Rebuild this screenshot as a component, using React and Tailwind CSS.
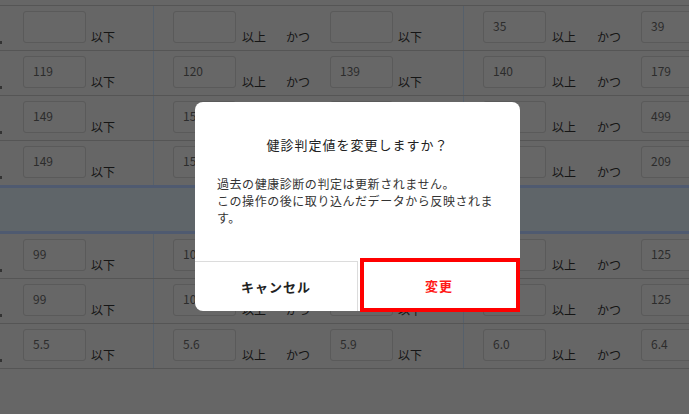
import React from "react";

const FONT = { fontFamily: '"Noto Sans CJK JP", "Noto Sans", sans-serif' };

function Box({ v }) {
  return (
    <div className="mt-[5px] h-[32px] w-[63px] shrink-0 rounded-[3px] border border-[#5a5a5a] bg-[#676767] pl-[9px] pt-[6px] text-[12px] leading-[16px] text-[#2c2c2c]">
      {v}
    </div>
  );
}

function Label({ t, ml }) {
  return (
    <span className={`mt-[23px] shrink-0 text-[12px] leading-[16px] text-[#151515] ${ml}`}>{t}</span>
  );
}

function Row({ a, b, c, d, e, blue }) {
  return (
    <div className={`flex h-[45px] border-b ${blue ? "border-[#4f5a70]" : "border-[#555555]"}`}>
      <div className="flex w-[154px] shrink-0 border-r border-[#56606b]">
        <div className="mt-[35px] h-[3px] w-[2px] shrink-0 bg-[#333]" />
        <div className="ml-[21px] flex">
          <Box v={a} />
          <Label t="以下" ml="ml-[5px]" />
        </div>
      </div>
      <div className="flex w-[310px] shrink-0 border-r border-[#56606b] pl-[19px]">
        <Box v={b} />
        <Label t="以上" ml="ml-[6px]" />
        <Label t="かつ" ml="ml-[20px]" />
        <div className="ml-[20px] flex">
          <Box v={c} />
          <Label t="以下" ml="ml-[5px]" />
        </div>
      </div>
      <div className="flex flex-1 pl-[19px]">
        <Box v={d} />
        <Label t="以上" ml="ml-[6px]" />
        <Label t="かつ" ml="ml-[21px]" />
        <div className="ml-[20px] flex">
          <Box v={e} />
        </div>
      </div>
    </div>
  );
}

export default function App() {
  return (
    <div className="relative h-[414px] w-[689px] overflow-hidden bg-[#666666]" style={FONT}>
      <div className="h-[6px] border-b border-[#555555]" />
      <Row a="" b="" c="" d="35" e="39" />
      <Row a="119" b="120" c="139" d="140" e="179" />
      <Row a="149" b="150" c="199" d="200" e="499" />
      <Row a="149" b="150" c="179" d="180" e="209" blue />
      <div className="h-[48px] border-t-[2px] border-b-[3px] border-[#4f5a70] bg-[#5f6569]" />
      <Row a="99" b="100" c="119" d="120" e="125" />
      <Row a="99" b="100" c="119" d="120" e="125" />
      <Row a="5.5" b="5.6" c="5.9" d="6.0" e="6.4" />

      <div className="absolute left-[195px] top-[102px] flex h-[209px] w-[325px] flex-col rounded-[8px] bg-white">
        <div className="flex-1 px-[22px] pt-[33px]">
          <div className="text-center text-[13px] leading-[20px] tracking-[1px] text-[#222]">
            健診判定値を変更しますか？
          </div>
          <div className="mt-[20px] text-[12px] leading-[17px] tracking-[0.55px] text-[#333]">
            過去の健康診断の判定は更新されません。
            <br />
            この操作の後に取り込んだデータから反映されます。
          </div>
        </div>
        <div className="flex h-[50px]">
          <div className="flex w-[163px] items-center justify-center rounded-bl-[8px] border-t border-r border-[#dcdcdc] text-[13px] font-bold tracking-[1px] text-[#222]">
            キャンセル
          </div>
          <div className="relative flex flex-1 items-center justify-center text-[13px] font-bold tracking-[1px] text-[#ff1a1a]">
            <div className="absolute -bottom-[1px] -top-[3px] left-[2px] right-0 border-4 border-[#ff0000]" />
            変更
          </div>
        </div>
      </div>
    </div>
  );
}
